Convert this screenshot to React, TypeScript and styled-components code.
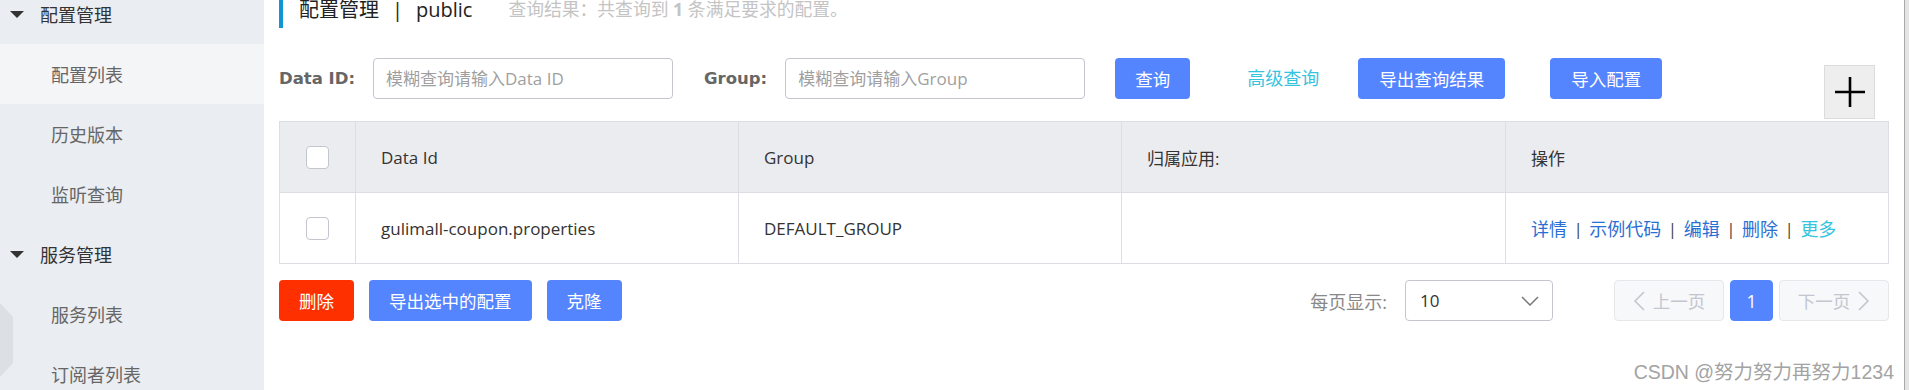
import React from 'react'
import styled, { createGlobalStyle } from 'styled-components'

const GlobalStyle = createGlobalStyle`
  html, body { margin:0; padding:0; background:#fff; }
  body {
    font-family: "Open Sans", "Noto Sans CJK SC", sans-serif;
    width:1909px;
    height:390px;
    overflow:hidden;
  }
  * { box-sizing:border-box; }
`

const Page = styled.div`
  position:relative;
  display:flex;
  width:1909px;
  height:390px;
  overflow:hidden;
`

const Sidebar = styled.div`
  position:relative;
  width:264px;
  flex-shrink:0;
  background:#eaedf1;
  overflow:hidden;
`

const SideList = styled.ul`
  list-style:none;
  margin:-16px 0 0;
  padding:0;
`

const GroupTitle = styled.li`
  display:flex;
  align-items:center;
  height:60px;
  padding-left:10px;
  font-size:18px;
  color:#333;
`

const Caret = styled.span`
  width:0;
  height:0;
  border-left:7px solid transparent;
  border-right:7px solid transparent;
  border-top:7px solid #333;
  margin-right:16px;
`

const SideItem = styled.li<{ $active?: boolean }>`
  display:flex;
  align-items:center;
  height:60px;
  padding-left:51px;
  font-size:18px;
  color:#666;
  background:${p => (p.$active ? '#f4f5f7' : 'transparent')};
`

const Hexagon = styled.svg`
  position:absolute;
  left:0;
  top:303px;
`

const Main = styled.div`
  flex:1;
  min-width:0;
  display:flex;
  flex-direction:column;
  padding:0 15px;
`

const ScrollTrack = styled.div`
  width:5px;
  flex-shrink:0;
  border-left:1px solid #a9a9a9;
  background:#e4e4e4;
`

const TitleBar = styled.div`
  display:flex;
  align-items:center;
  height:40px;
  margin-top:-12px;
  border-left:4px solid #1195d6;
  padding-left:16px;
`

const TitleText = styled.span`
  font-size:20px;
  color:#222;
`

const TitleSep = styled.span`
  margin:0 13px;
`

const Hint = styled.span`
  margin-left:36px;
  font-size:17.8px;
  color:#c4c4c4;

  b { font-weight:700; }
`

const SearchRow = styled.div`
  display:flex;
  align-items:flex-start;
  margin-top:30px;
`

const Label = styled.label<{ $gap?: number }>`
  height:41px;
  line-height:41px;
  margin-left:${p => p.$gap || 0}px;
  margin-right:18px;
  font-family:"DejaVu Sans", sans-serif;
  font-weight:700;
  font-size:16.5px;
  color:#666;
`

const TextInput = styled.input`
  width:300px;
  height:41px;
  padding:0 12px;
  border:1px solid #c4c6cf;
  border-radius:4px;
  outline:none;
  font-family:inherit;
  font-size:17px;
  color:#333;

  &::placeholder { color:#9f9f9f; }
`

const Btn = styled.button<{ $danger?: boolean; $gap?: number }>`
  height:41px;
  padding:0 20px;
  margin-left:${p => p.$gap || 0}px;
  border:none;
  border-radius:4px;
  background:${p => (p.$danger ? '#ff3000' : '#5584ff')};
  color:#fff;
  font-family:inherit;
  font-size:17.5px;
  cursor:pointer;
  flex-shrink:0;
`

const WideBtn = styled(Btn)`
  padding:0 21px;
`

const LinkBtn = styled.span<{ $gap?: number }>`
  height:41px;
  line-height:41px;
  margin-left:${p => p.$gap || 0}px;
  margin-right:3px;
  font-size:18px;
  color:#36c3df;
`

const PlusBox = styled.div`
  margin-left:auto;
  margin-right:14px;
  margin-top:7px;
  width:51px;
  height:54px;
  display:flex;
  align-items:center;
  justify-content:center;
  background:#eeeeee;
  border:1px solid #dcdcdc;
`

const Table = styled.div`
  margin-top:2px;
  border:1px solid #dcdee3;
`

const Row = styled.div<{ $head?: boolean }>`
  display:grid;
  grid-template-columns:76px 383px 383px 384px 1fr;
  background:${p => (p.$head ? '#ebecf0' : '#fff')};
  border-top:${p => (p.$head ? 'none' : '1px solid #dcdee3')};
`

const Cell = styled.div<{ $center?: boolean }>`
  height:70px;
  display:flex;
  align-items:center;
  justify-content:${p => (p.$center ? 'center' : 'flex-start')};
  padding-left:${p => (p.$center ? 0 : 25)}px;
  border-right:1px solid #dcdee3;
  font-size:17px;
  color:#333;

  &:last-child { border-right:none; }
`

const Check = styled.span`
  width:23px;
  height:23px;
  border:1px solid #c4c6cf;
  border-radius:4px;
  background:#fff;
`

const ActLink = styled.span<{ $more?: boolean }>`
  color:${p => (p.$more ? '#36c3df' : '#2a70d4')};
  font-size:18px;
`

const ActSep = styled.span`
  margin:0 6.5px;
  color:#444;
`

const BottomBar = styled.div`
  display:flex;
  align-items:center;
  margin-top:16px;
  height:41px;
`

const BtnGroup = styled.div`
  display:flex;
  gap:15px;
`

const PageSizeLabel = styled.span`
  margin-left:auto;
  margin-right:18px;
  font-size:18px;
  color:#888;
`

const Select = styled.div`
  width:148px;
  height:41px;
  display:flex;
  align-items:center;
  justify-content:space-between;
  padding:0 13px 0 14px;
  border:1px solid #c4c6cf;
  border-radius:4px;
  font-size:17px;
  color:#333;
`

const Pager = styled.div`
  display:flex;
  gap:6px;
  margin-left:61px;
`

const PageBtn = styled.div<{ $current?: boolean }>`
  height:41px;
  display:flex;
  align-items:center;
  justify-content:center;
  gap:8px;
  width:${p => (p.$current ? 43 : 110)}px;
  border-radius:4px;
  border:1px solid ${p => (p.$current ? '#5584ff' : '#e6e7eb')};
  background:${p => (p.$current ? '#5584ff' : '#f7f8fa')};
  color:${p => (p.$current ? '#fff' : '#c4c6cf')};
  font-size:17.5px;
`

const Watermark = styled.div`
  position:absolute;
  right:15px;
  top:356px;
  font-family:"Liberation Sans", "Noto Sans CJK SC", sans-serif;
  font-size:19.5px;
  color:#a3a3a3;
`

const Chevron = ({ dir }: { dir: 'left' | 'right' | 'down' }) => {
  if (dir === 'down') {
    return (
      <svg width="18" height="10" viewBox="0 0 18 10">
        <path d="M1 1 L9 9 L17 1" fill="none" stroke="#777" strokeWidth="1.5" />
      </svg>
    )
  }
  return (
    <svg width="12" height="20" viewBox="0 0 12 20">
      <path
        d={dir === 'left' ? 'M11 1 L2 10 L11 19' : 'M1 1 L10 10 L1 19'}
        fill="none"
        stroke="#c4c6cf"
        strokeWidth="1.6"
      />
    </svg>
  )
}

const actions = ['详情', '示例代码', '编辑', '删除']

const App = () => {
  return (
    <Page>
      <GlobalStyle />
      <Sidebar>
        <SideList>
          <GroupTitle><Caret />配置管理</GroupTitle>
          <SideItem $active>配置列表</SideItem>
          <SideItem>历史版本</SideItem>
          <SideItem>监听查询</SideItem>
          <GroupTitle><Caret />服务管理</GroupTitle>
          <SideItem>服务列表</SideItem>
          <SideItem>订阅者列表</SideItem>
        </SideList>
        <Hexagon width="14" height="75" viewBox="0 0 14 75">
          <polygon points="0,0 13,14 13,60 0,74" fill="#dcdfe4" />
        </Hexagon>
      </Sidebar>

      <Main>
        <TitleBar>
          <TitleText>配置管理<TitleSep>|</TitleSep>public</TitleText>
          <Hint>查询结果：共查询到 <b>1</b> 条满足要求的配置。</Hint>
        </TitleBar>

        <SearchRow>
          <Label>Data ID:</Label>
          <TextInput placeholder="模糊查询请输入Data ID" />
          <Label $gap={31}>Group:</Label>
          <TextInput placeholder="模糊查询请输入Group" />
          <Btn $gap={30}>查询</Btn>
          <LinkBtn $gap={57}>高级查询</LinkBtn>
          <WideBtn $gap={36}>导出查询结果</WideBtn>
          <WideBtn $gap={45}>导入配置</WideBtn>
          <PlusBox>
            <svg width="32" height="32" viewBox="0 0 32 32">
              <path d="M16 1 V31 M1 16 H31" stroke="#000" strokeWidth="2.6" />
            </svg>
          </PlusBox>
        </SearchRow>

        <Table>
          <Row $head>
            <Cell $center><Check /></Cell>
            <Cell>Data Id</Cell>
            <Cell>Group</Cell>
            <Cell>归属应用:</Cell>
            <Cell>操作</Cell>
          </Row>
          <Row>
            <Cell $center><Check /></Cell>
            <Cell>gulimall-coupon.properties</Cell>
            <Cell>DEFAULT_GROUP</Cell>
            <Cell />
            <Cell>
              {actions.map(a => (
                <React.Fragment key={a}>
                  <ActLink>{a}</ActLink>
                  <ActSep>|</ActSep>
                </React.Fragment>
              ))}
              <ActLink $more>更多</ActLink>
            </Cell>
          </Row>
        </Table>

        <BottomBar>
          <BtnGroup>
            <Btn $danger>删除</Btn>
            <Btn>导出选中的配置</Btn>
            <Btn>克隆</Btn>
          </BtnGroup>
          <PageSizeLabel>每页显示:</PageSizeLabel>
          <Select>
            <span>10</span>
            <Chevron dir="down" />
          </Select>
          <Pager>
            <PageBtn><Chevron dir="left" />上一页</PageBtn>
            <PageBtn $current>1</PageBtn>
            <PageBtn>下一页<Chevron dir="right" /></PageBtn>
          </Pager>
        </BottomBar>
      </Main>
      <ScrollTrack />

      <Watermark>CSDN @努力努力再努力1234</Watermark>
    </Page>
  )
}

export default App
